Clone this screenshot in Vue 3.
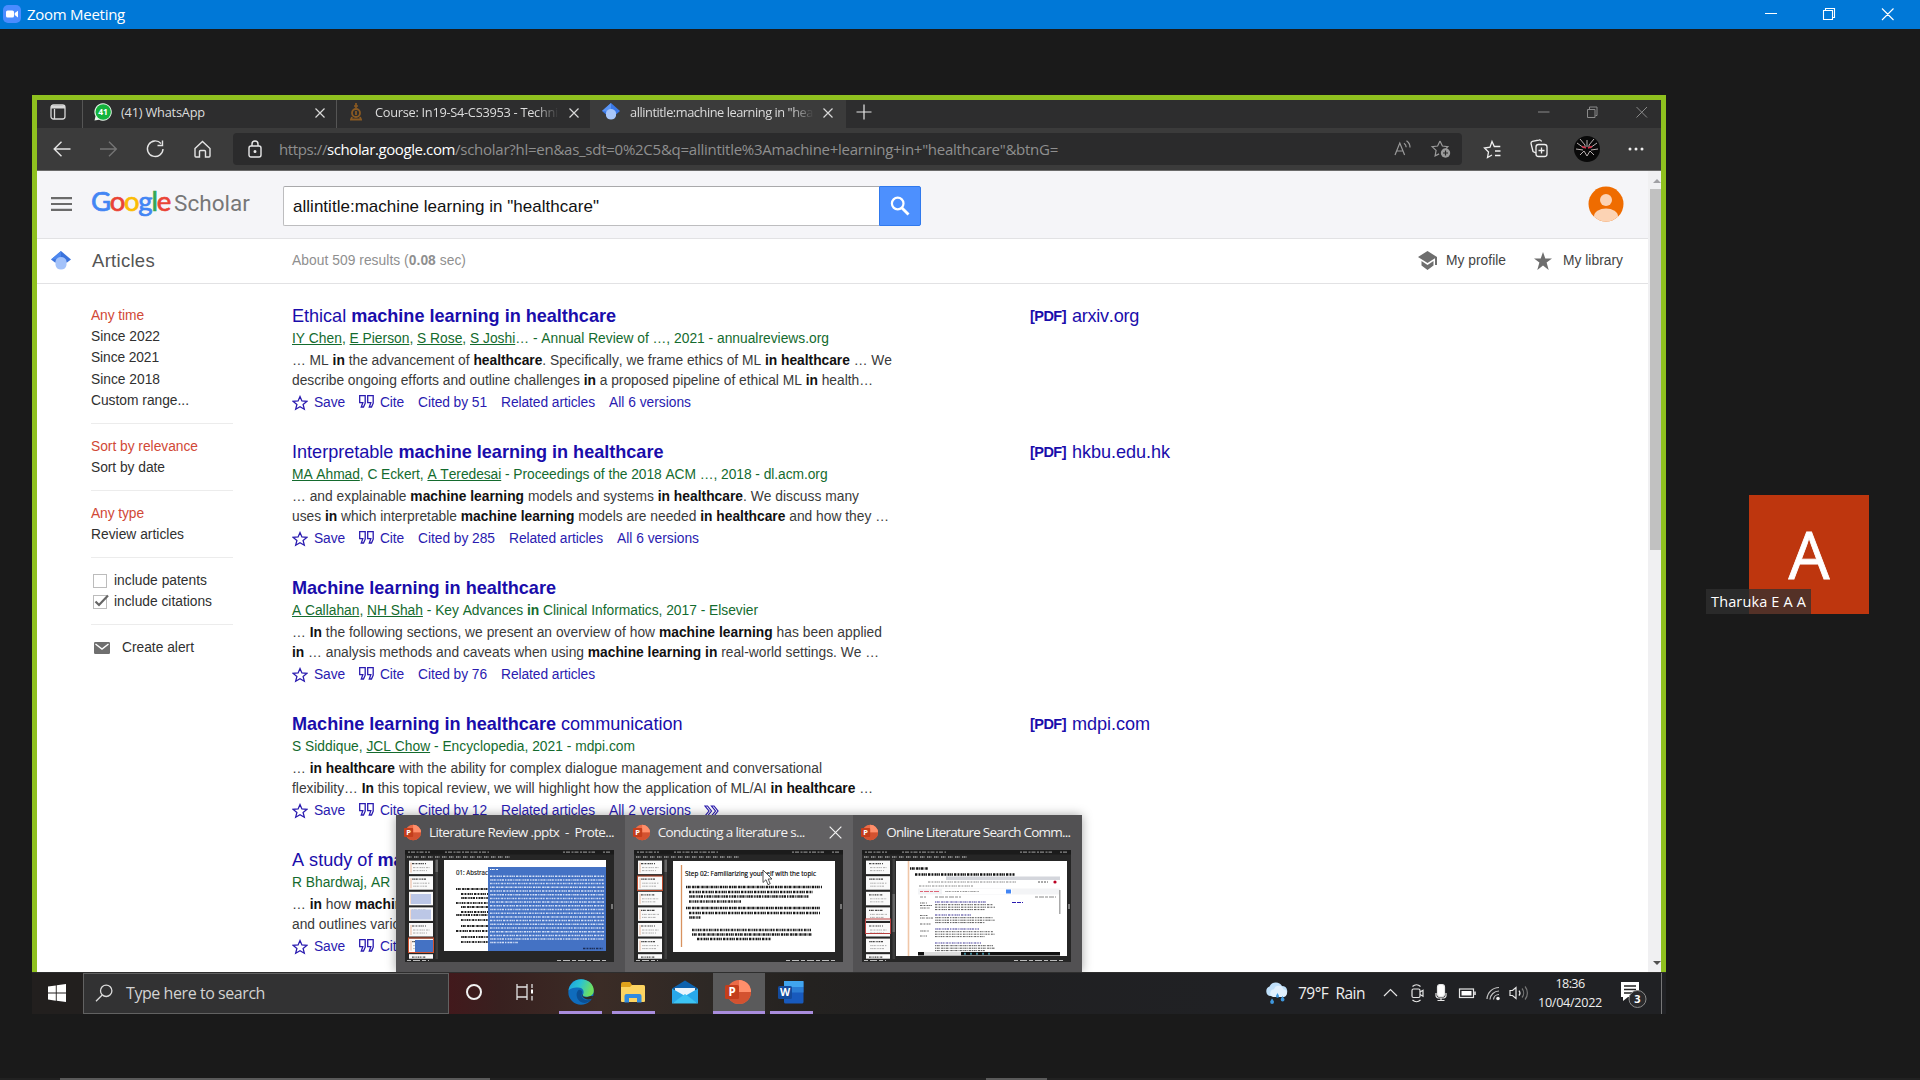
<script setup>
import { h } from 'vue'

// Spreads letters so that a line takes up the given width in pixels.
const vFit = {
  mounted(el, { value }) {
    if (!value) return
    const natural = el.getBoundingClientRect().width
    el.style.letterSpacing = (value - natural) / el.textContent.length + 'px'
  }
}

// *bold* and _underlined_ runs inside a line of text
const Rich = (props) =>
  props.t.split(/(\*[^*]+\*|_[^_]+_)/).filter(Boolean).map((s) =>
    s[0] === '*' ? h('b', s.slice(1, -1)) : s[0] === '_' ? h('u', s.slice(1, -1)) : s
  )
Rich.props = ['t']

const results = [
  {
    title: ['Ethical *machine learning in healthcare*', 324],
    meta: ['_IY Chen_, _E Pierson_, _S Rose_, _S Joshi_… - Annual Review of …, 2021 - annualreviews.org', 537],
    lines: [
      ['… ML *in* the advancement of *healthcare*. Specifically, we frame ethics of ML *in healthcare* … We', 600],
      ['describe ongoing efforts and outline challenges *in* a proposed pipeline of ethical ML *in* health…', 581]
    ],
    links: [['Cited by 51', 69], ['Related articles', 94], ['All 6 versions', 82]],
    pdf: ['arxiv.org', 67]
  },
  {
    title: ['Interpretable *machine learning in healthcare*', 371.5],
    meta: ['_MA Ahmad_, C Eckert, _A Teredesai_ - Proceedings of the 2018 ACM …, 2018 - dl.acm.org', 535.5],
    lines: [
      ['… and explainable *machine learning* models and systems *in healthcare*. We discuss many', 567],
      ['uses *in* which interpretable *machine learning* models are needed *in healthcare* and how they …', 597]
    ],
    links: [['Cited by 285', 77], ['Related articles', 94], ['All 6 versions', 82]],
    pdf: ['hkbu.edu.hk', 98]
  },
  {
    title: ['*Machine learning in healthcare*', 264],
    meta: ['_A Callahan_, _NH Shah_ - Key Advances *in* Clinical Informatics, 2017 - Elsevier', 466],
    lines: [
      ['… *In* the following sections, we present an overview of how *machine learning* has been applied', 590],
      ['*in* … analysis methods and caveats when using *machine learning in* real-world settings. We …', 587]
    ],
    links: [['Cited by 76', 69], ['Related articles', 94]]
  },
  {
    title: ['*Machine learning in healthcare* communication', 390.5],
    meta: ['S Siddique, _JCL Chow_ - Encyclopedia, 2021 - mdpi.com', 343],
    lines: [
      ['… *in healthcare* with the ability for complex dialogue management and conversational', 530],
      ['flexibility… *In* this topical review, we will highlight how the application of ML/AI *in healthcare* …', 581]
    ],
    links: [['Cited by 12', 69], ['Related articles', 94], ['All 2 versions', 82]],
    more: true,
    pdf: ['mdpi.com', 78]
  },
  {
    title: ['A study of *machine*'],
    meta: ['R Bhardwaj, AR'],
    lines: [['… *in* how *machine*'], ['and outlines various']],
    links: []
  }
]

const filters = [
  [['Any time', 53, 1], ['Since 2022', 69], ['Since 2021', 68], ['Since 2018', 69], ['Custom range...', 98]],
  [['Sort by relevance', 107, 1], ['Sort by date', 74]],
  [['Any type', 53, 1], ['Review articles', 93]]
]

// Deterministic word-like dash patterns for the miniature slides
const dash = (i) => ['5 1 3 1 7 1.2 2 1', '3 1 6 1 2 1 4 1.4', '7 1 4 1.2 5 1 2 1', '2 1 5 1 3 1.2 8 1'][i % 4]
const fine = (i) => ['1.2 .6 2 .5 .8 1 2.4 .7', '2 .6 .9 .5 1.4 1.1', '.8 .5 1.6 .6 2.2 1 1 .6', '1.8 .7 1 .5 .7 .9'][i % 4]
const star = 'M8 1.6 9.9 6 14.8 6.4 11.1 9.5 12.3 14.2 8 11.7 3.7 14.2 4.9 9.5 1.2 6.4 6.1 6Z'
</script>

<template>
  <div class="screen">
    <header class="titlebar">
      <svg class="zoomlogo" viewBox="0 0 18 18"><rect width="18" height="18" rx="5" fill="#4a8cff"/><rect x="3" y="5.5" width="8" height="7" rx="1.6" fill="#fff"/><path d="M11.7 8 15 5.8v6.6L11.7 10z" fill="#fff"/></svg>
      <span v-fit="98">Zoom Meeting</span>
      <svg class="winctl" viewBox="0 0 130 14" width="130" height="14" fill="none" stroke="#fff" stroke-width="1.1"><path d="M0 6.5h12M58.5 3.5h9v9h-9zM60.5 3.5v-2h9v9h-2M117 1.500l11.500 11.500M128.500 1.500 117 13"/></svg>
    </header>

    <main>
      <section class="share">
        <div class="browser">
          <div class="tabs">
            <svg class="tabact" viewBox="0 0 16 16" fill="none" stroke="#d8d8d8" stroke-width="1.3"><rect x="1" y="1" width="14" height="14" rx="2.500"/><path d="M1 3h14" stroke-width="3"/><path d="M4.500 5v10"/></svg>
            <div class="tab t1">
              <svg class="fav" viewBox="0 0 18 18"><path d="M9 .300a8.700 8.700 0 1 1-4 16.400L.500 17.600l1-4.300A8.700 8.700 0 0 1 9 .300z" fill="#e9f7ec"/><circle cx="9.200" cy="9" r="7.700" fill="#14b33c"/><text x="9" y="12" text-anchor="middle" font-size="8.500" font-weight="700" fill="#fff">41</text></svg>
              <span v-fit="84">(41) WhatsApp</span>
              <svg class="x" viewBox="0 0 10 10"><path d="M.500.500l9 9M9.500.500l-9 9"/></svg>
            </div>
            <div class="tab t2">
              <svg class="fav crest" viewBox="0 0 12 18" fill="none" stroke="#8a5a22"><path d="M6 0v5M4 3h4" stroke-width="1.700"/><circle cx="6" cy="10" r="4" stroke-width="1.800"/><path d="M2 14l-1 2.500h10L10 14M6 8v4" stroke-width="1.800"/></svg>
              <span class="fade"><i v-fit="183">Course: In19-S4-CS3953 - Techni</i></span>
              <svg class="x" viewBox="0 0 10 10"><path d="M.500.500l9 9M9.500.500l-9 9"/></svg>
            </div>
            <div class="tab t3">
              <svg class="fav" viewBox="0 0 18 18"><path d="M9 0 0 8l4 3.500h10L18 8z" fill="#3b78e7"/><path d="M9 0 0 8l9 1z" fill="#5b95f5"/><path d="M4 9.500a5.300 5.300 0 0 1 10 0V13a5.300 5.300 0 0 1-10 0z" fill="#a8c7fb"/></svg>
              <span class="fade"><i v-fit="183">allintitle:machine learning in "hea</i></span>
              <svg class="x" viewBox="0 0 10 10"><path d="M.500.500l9 9M9.500.500l-9 9"/></svg>
            </div>
            <svg class="plus" viewBox="0 0 16 16"><path d="M8 .500v15M.500 8h15" stroke="#e6e6e6" stroke-width="1.200"/></svg>
            <svg class="bctl" viewBox="0 0 112 12" fill="none" stroke="#8a8a8a"><path d="M0 6h11.500M49.500 3.500h7.500v8h-7.500zM51.500 3V1h7.500v8.500h-1.500M98.500 1l10.500 10.500M109 1 98.500 11.500"/></svg>
          </div>

          <div class="toolbar">
            <svg class="nav" viewBox="0 0 160 20" fill="none" stroke="#e4e4e4" stroke-width="1.400"><path d="M17.500 10H1.500M8.500 2.800 1.200 10l7.300 7.200"/><path d="M47 10h16M56 2.800 63.300 10 56 17.200" stroke="#757575"/><path d="M108 4.500A7.800 7.800 0 1 0 110 10M109.500 1.500v5h-5"/><path d="M142 9.500 149.500 2.500 157 9.500V17a1 1 0 0 1-1 1h-3.500v-5.500a1 1 0 0 0-1-1h-4a1 1 0 0 0-1 1V18H143a1 1 0 0 1-1-1z"/></svg>
            <div class="addr">
              <svg class="lock" viewBox="0 0 14 18" fill="none" stroke="#e8e8e8" stroke-width="1.400"><rect x="1" y="6" width="12" height="11" rx="2"/><path d="M4 6V4a3 3 0 0 1 6 0v2"/><circle cx="7" cy="11.500" r=".800" fill="#fff"/></svg>
              <span class="url"><i v-fit="48">https://</i><i v-fit="128" class="host">scholar.google.com</i><i v-fit="603">/scholar?hl=en&amp;as_sdt=0%2C5&amp;q=allintitle%3Amachine+learning+in+"healthcare"&amp;btnG=</i></span>
              <svg class="addricons" viewBox="0 0 58 20" fill="none" stroke="#9b9b9b" stroke-width="1.200"><path d="M1 16 5.800 4 10.600 16M2.600 12H9M10 4.200a5 5 0 0 1 2.200 4M12.500 1.800A8 8 0 0 1 16 8.500"/><path d="M46 2l2.400 5 5.500.700-2 2M46 2l-2.400 5-5.500.700 4 3.700-1 5.500 4-2"/><circle cx="51.500" cy="14" r="4.700" fill="#9b9b9b" stroke="none"/><path d="M51.500 11.500v5M49 14h5" stroke="#2b2b2b"/></svg>
            </div>
            <svg class="tools" viewBox="0 0 168 28" fill="none" stroke="#f0f0f0" stroke-width="1.300"><path d="M10 20l-4.500 2.500 1-5.500-4-4 5.500-.800L10 6.500l2.300 5h6M13 16h5.500M13 20.500h5.500"/><path d="M54 18l-3-1.500-2-8a2 2 0 0 1 1.500-2.200L57 5a2 2 0 0 1 2.500 1.500"/><rect x="54" y="9.500" width="11" height="12" rx="2.500"/><path d="M59.500 12.500v6M56.500 15.500h6"/>
              <circle cx="105" cy="14" r="13" fill="#090909" stroke="none"/><path d="M95 8l7 5M98 4l5 6M115 8l-7 5M112 4l-5 6M105 5v5M94 14l7 1M116 14l-7 1M102 16l3 5 3-5M98 20l4-4M112 20l-4-4M102 11h6" stroke="#b9b1b1" stroke-width="1"/><path d="M100 11.500l4 1.500M110 11.500l-4 1.500" stroke="#d8304a" stroke-width="1.600"/>
              <g fill="#eee" stroke="none"><circle cx="148" cy="14" r="1.500"/><circle cx="154" cy="14" r="1.500"/><circle cx="160" cy="14" r="1.500"/></g></svg>
          </div>

          <div class="page">
            <div class="content">
              <div class="gshead">
                <svg class="burger" viewBox="0 0 21 14"><path d="M0 1.200h21M0 7h21M0 12.800h21" stroke="#6b6b6b" stroke-width="2.200"/></svg>
                <div class="logo"><b v-fit="79"><i class="gb">G</i><i class="gr">o</i><i class="gy">o</i><i class="gb">g</i><i class="gg">l</i><i class="gr">e</i></b><span v-fit="76">Scholar</span></div>
                <div class="searchbox"><span v-fit="306">allintitle:machine learning in "healthcare"</span></div>
                <div class="searchbtn"><svg viewBox="0 0 20 20" fill="none" stroke="#fff"><circle cx="7.700" cy="7.500" r="5.800" stroke-width="2.200"/><path d="M12 12l6.500 6.500" stroke-width="2.800"/></svg></div>
                <svg class="user" viewBox="0 0 36 36"><defs><clipPath id="uc"><circle cx="18" cy="18" r="17.500"/></clipPath></defs><g clip-path="url(#uc)"><rect width="36" height="36" fill="#ef6c00"/><circle cx="18" cy="14" r="6" fill="#fcd3b4"/><ellipse cx="18" cy="30.500" rx="12" ry="8" fill="#fcd3b4"/></g></svg>
              </div>
              <div class="subhead">
                <svg class="cap" viewBox="0 0 20 20"><path d="M10 0 0 8.500l4 3h12l4-3z" fill="#3b73dc"/><path d="M10 0 0 8.500l10-1z" fill="#4d87ee"/><path d="M4.500 10a5.800 5.800 0 0 1 11 0v4a5.600 5.600 0 0 1-11 0z" fill="#a3c2fa"/></svg>
                <span class="art"><i v-fit="63">Articles</i></span>
                <span class="about" v-fit="174">About 509 results (<b>0.08</b> sec)</span>
                <span class="spring"></span>
                <svg class="mp" viewBox="0 0 19 20" fill="#6e6e6e"><path d="M9.500 0 0 6l9.500 6L17 7.300V14h2V6zM3.500 10v4.500l6 4.500 6-4.500V10l-6 4z"/></svg>
                <span class="my" v-fit="60">My profile</span>
                <svg class="ml" viewBox="0 0 18 18" fill="#6e6e6e"><path d="M9 0l2.300 6.500H18L12.600 10.600 14.700 18 9 13.500 3.300 18 5.400 10.600 0 6.500h6.700z"/></svg>
                <span class="my" v-fit="60">My library</span>
              </div>

              <div class="cols">
                <aside>
                  <div v-for="(g, gi) in filters" :key="gi" class="group">
                    <p v-for="f in g" :key="f[0]" :class="{ on: f[2] }"><span v-fit="f[1]">{{ f[0] }}</span></p>
                  </div>
                  <div class="group checks">
                    <p><svg viewBox="0 0 16 16"><rect x=".500" y="1.500" width="13" height="13" fill="#fff" stroke="#bcbcbc"/></svg><span v-fit="93">include patents</span></p>
                    <p><svg viewBox="0 0 16 16"><rect x=".500" y="1.500" width="13" height="13" fill="#fff" stroke="#bcbcbc"/><path d="M2.500 7.500 6 11 15 1.500" fill="none" stroke="#666" stroke-width="2.200"/></svg><span v-fit="98">include citations</span></p>
                  </div>
                  <p class="alert"><svg viewBox="0 0 16 12"><rect width="16" height="12" rx="1.200" fill="#6f6f6f"/><path d="M1.500 2 8 7l6.500-5" fill="none" stroke="#fff" stroke-width="1.400"/></svg><span v-fit="72">Create alert</span></p>
                </aside>

                <div class="results">
                  <article v-for="(r, i) in results" :key="i">
                    <div class="body">
                      <h3><span v-fit="r.title[1]"><Rich :t="r.title[0]" /></span></h3>
                      <div class="meta"><span v-fit="r.meta[1]"><Rich :t="r.meta[0]" /></span></div>
                      <div v-for="l in r.lines" :key="l[0]" class="snip"><span v-fit="l[1]"><Rich :t="l[0]" /></span></div>
                      <div class="links">
                        <svg class="st" viewBox="0 0 16 16"><path :d="star" fill="none" stroke="#2a1bb0" stroke-width="1.300"/></svg><span class="save" v-fit="31">Save</span>
                        <svg class="qt" viewBox="0 0 15 13" fill="none" stroke="#2a1bb0" stroke-width="1.300"><path d="M.700.700h5.500v7.500L4.500 12H2.300l1.500-4.300H.700zM8.700.700h5.500v7.500L12.500 12h-2.200l1.500-4.300H8.700z"/></svg><span v-fit="24">Cite</span>
                        <span v-for="k in r.links" :key="k[0]" class="lk" v-fit="k[1]">{{ k[0] }}</span>
                        <svg v-if="r.more" class="dbl" viewBox="0 0 15 12" fill="none" stroke="#2a1bb0" stroke-width="1.200"><path d="M1 1h2.500l4 5-4 5H1l4-5zM7.500 1H10l4 5-4 5H7.500l4-5z"/></svg>
                      </div>
                    </div>
                    <div v-if="r.pdf" class="pdf"><b v-fit="36">[PDF]</b><span v-fit="r.pdf[1]">{{ r.pdf[0] }}</span></div>
                  </article>
                </div>
              </div>
            </div>
            <div class="scroll"><i class="up"></i><i class="thumb"></i><i class="down"></i></div>
          </div>
        </div>

        <div class="previews">
          <div v-for="n in 3" :key="n" class="pv" :class="'pv' + n">
            <div class="pvt">
              <svg class="pp" viewBox="0 0 26 26"><circle cx="14" cy="13" r="12" fill="#ed6c47"/><path d="M14 1a12 12 0 0 1 12 12H14z" fill="#ff8f6b"/><path d="M2 13h24a12 12 0 0 1-24 0z" fill="#d35230"/><rect y="6" width="14" height="14" rx="1.500" fill="#c43e1c"/><text x="7" y="17" text-anchor="middle" font-size="11.500" font-weight="700" fill="#fff">P</text></svg>
              <span v-if="n === 1" v-fit="185">Literature Review .pptx&nbsp; -&nbsp; Prote...</span>
              <span v-if="n === 2" v-fit="147">Conducting a literature s...</span>
              <span v-if="n === 3" v-fit="184">Online Literature Search Comm...</span>
              <svg v-if="n === 2" class="px" viewBox="0 0 14 14"><path d="M.700.700l12.600 12.600M13.300.700.700 13.300" stroke="#f2f2f2" stroke-width="1.300"/></svg>
            </div>
            <svg class="mini" viewBox="0 0 209 112" width="209" height="112">
              <rect width="209" height="112" fill="#262626"/>
              <rect width="209" height="4.500" fill="#1b1b1b"/>
              <path d="M3 2.200h22M40 2.200h44M158 2.200h32M198 2.200h8" stroke="#888" stroke-width="1.200" stroke-dasharray="2 1 4 1.500"/>
              <path d="M2 7h104" stroke="#a2a2a2" stroke-width="1.700" stroke-dasharray="1 .500 1.500 .500 1 2.500"/>
              <path d="M2 110.500h22M152 110.500h50" stroke="#bbb" stroke-width="1.200" stroke-dasharray="4 2 7 2"/>
              <rect x="206" y="54" width="2" height="5" fill="#777"/>
              <rect x="30.500" y="9" width="2.500" height="100" fill="#3d3d3d"/>
              <rect x="30.500" :y="n === 3 ? 44 : 10" width="2.500" :height="n === 3 ? 38 : 12" fill="#666"/>
              <g v-for="k in 7" :key="k">
                <rect x="4" :y="-5 + k * 15.600" width="24" :height="k === 7 ? 4.500 : 13.500" fill="#fafafa"/>
                <path :d="`M7 ${-2 + k * 15.6}h14`" stroke="#444" stroke-width="1.200" :stroke-dasharray="fine(k)"/>
                <g v-if="k < 7"><path :d="`M8 ${2 + k * 15.6}h17M8 ${5 + k * 15.6}h14`" stroke="#999" stroke-width=".800" :stroke-dasharray="fine(k)"/>
                <path v-if="n !== 3" :d="`M6 ${-3 + k * 15.6}v10`" stroke="#e59870" stroke-width=".700"/></g>
              </g>
              <g v-if="n === 1">
                <g fill="#bcc7e6"><rect x="6" y="44" width="20" height="10"/><rect x="6" y="59.500" width="20" height="10"/></g>
                <rect x="3.500" y="88" width="25" height="14.500" fill="none" stroke="#d35230"/><rect x="10" y="90" width="18" height="12" fill="#4472c4"/>
                <rect x="39" y="10" width="162" height="91" fill="#fff"/>
                <text x="51" y="25" font-size="6.500" fill="#111" stroke="#111" stroke-width=".150" textLength="32" lengthAdjust="spacingAndGlyphs">01: Abstrac</text>
                <g stroke="#222" stroke-width="2"><path v-for="(y, k) in [39, 44, 48, 53, 57, 62, 65, 70, 76, 81, 87, 92]" :key="k" :d="`M${k % 3 ? 56 : 51} ${y}H84`" :stroke-dasharray="fine(k)"/></g>
                <rect x="83" y="17" width="118" height="84" fill="#4472c4"/>
                <path d="M85 19.500h8" stroke="#fff" :stroke-dasharray="fine(0)"/>
                <g stroke="#d3dff6" stroke-width="1.500"><path v-for="k in 18" :key="k" :d="`M85 ${22.5 + k * 3.7}H199`" :stroke-dasharray="fine(k)"/><path d="M85 92.500h28" :stroke-dasharray="fine(2)"/></g>
                <path d="M178 98.500h20" stroke="#1b2c55" stroke-width="1.500" :stroke-dasharray="fine(1)"/>
              </g>
              <g v-if="n === 2">
                <rect x="3.500" y="26" width="25" height="14.500" fill="none" stroke="#b9472a"/>
                <rect x="39" y="11" width="162" height="91" fill="#fff"/><path d="M47.500 15v82" stroke="#d8925f" stroke-width="1.300"/>
                <text x="51" y="26" font-size="6.500" fill="#000" stroke="#000" stroke-width=".150" textLength="131" lengthAdjust="spacingAndGlyphs">Step 02: Familiarizing yourself with the topic</text>
                <g stroke="#1a1a1a" stroke-width="2.300">
                  <path v-for="(l, k) in [[52, 37, 188], [55, 42, 179], [55, 46.5, 175], [55, 51.5, 107], [52, 58, 186], [55, 63, 186], [55, 67.5, 67], [58, 80, 177], [58, 84.5, 178], [63, 89, 137]]" :key="k" :d="`M${l[0]} ${l[1]}H${l[2]}`" :stroke-dasharray="fine(k)"/>
                </g>
              </g>
              <g v-if="n === 3">
                <rect x="3.500" y="69" width="25" height="14.500" fill="none" stroke="#b94040"/>
                <rect x="34" y="11" width="171" height="95" fill="#fff"/><path d="M46.500 11v95" stroke="#f0c7a8" stroke-width="1.600"/>
                <path d="M48 18.500h18" stroke="#111" stroke-width="2.500" :stroke-dasharray="fine(0)"/>
                <path d="M53 24.500h100" stroke="#111" stroke-width="2.300" :stroke-dasharray="fine(1)"/>
                <rect x="84" y="26.500" width="114" height="3.500" fill="#d4d6dc"/><path d="M66 32h88M57 36h54" stroke="#888" :stroke-dasharray="fine(1)"/>
                <path d="M176 32h10" stroke="#555" stroke-dasharray="2 1"/><circle cx="193" cy="32" r="1.600" fill="#b02"/><circle cx="193" cy="41" r="1.600" fill="#b04"/>
                <rect x="56" y="38.500" width="142" height="6" fill="#f3f4f6"/><path d="M58 41.500h20" stroke="#d67" stroke-dasharray="3 1 5 1"/><rect x="80" y="39" width="70" height="5" fill="#fff"/><path d="M83 41.500h34" stroke="#999" :stroke-dasharray="fine(2)"/><rect x="144" y="39.500" width="5" height="4" fill="#4285f4"/>
                <path d="M58 47h6M73 47h26M173 47h21" stroke="#888" stroke-dasharray="3 1 5 1"/>
                <g stroke="#666"><path v-for="(y, k) in [53, 55.5, 58, 65.5, 68, 74, 81, 86]" :key="y" :d="`M58 ${y}h${7 + (k * 5) % 7}`" :stroke-dasharray="fine(k)"/></g>
                <g v-for="(y, k) in [52, 65, 79, 93]" :key="y"><path :d="`M73 ${y}h${[51, 36, 44, 46][k]}`" stroke="#3c3596" stroke-width="1.200" :stroke-dasharray="fine(k)"/><path :d="`M73 ${y + 2.7}h58M73 ${y + 5.2}h60M73 ${y + 7.6}h50`" stroke="#555" :stroke-dasharray="fine(k + 1)"/></g>
                <path d="M150 52.500h11" stroke="#2a1bb0" stroke-width="1.200" stroke-dasharray="4 1"/><rect x="197" y="40" width="1.500" height="24" fill="#aaa"/>
                <rect x="56" y="102" width="142" height="3.500" fill="#111"/><rect x="62" y="102" width="37" height="3.500" fill="#ddd"/><path d="M102 103.800h30" stroke="#489" stroke-width="2" stroke-dasharray="2 4"/>
              </g>
            </svg>
          </div>
        </div>
        <svg class="cursor" viewBox="0 0 11 17"><path d="M1 1v12.500l3-2.800 2 5 2.200-1-2-4.700H10z" fill="#fff" stroke="#444" stroke-width=".900"/></svg>

        <footer class="taskbar">
          <div class="start"><svg viewBox="0 0 18 18" fill="#fff"><path d="M0 2.500 7.800 1.400v7.200H0zM8.700 1.300 18 0v8.600H8.700zM0 9.500h7.800v7.200L0 15.600zM8.700 9.500H18V18l-9.300-1.300z"/></svg></div>
          <div class="find"><svg viewBox="0 0 18 18" fill="none" stroke="#dcdcdc" stroke-width="1.300"><circle cx="11.200" cy="6.800" r="5.700"/><path d="M7.200 11 1 17.200"/></svg><span v-fit="139">Type here to search</span></div>
          <div class="apps">
            <div class="app a1"><svg viewBox="0 0 18 18"><circle cx="9" cy="9" r="7" fill="none" stroke="#f2f2f2" stroke-width="2"/></svg></div>
            <div class="app a2"><svg viewBox="0 0 18 18" fill="none" stroke="#e2e2e2" stroke-width="1.300"><path d="M1 1v3h10V1M1 17v-3h10v3M1 4.500v9M11 4.500v9M16 1v4M16 13v4.500"/><rect x="15" y="6.500" width="2" height="4" fill="#fff" stroke="none"/></svg></div>
            <div class="app a3 run"><svg viewBox="0 0 26 26"><defs><linearGradient id="e1" x1="0" y1="0" x2="1" y2=".300"><stop offset="0" stop-color="#1b9de2"/><stop offset=".500" stop-color="#2bc3d2"/><stop offset="1" stop-color="#6ee05f"/></linearGradient></defs><circle cx="13" cy="13" r="12.700" fill="#0f6cbd"/><path d="M.400 12C1.500 4.500 7 .300 13 .300 20.500.300 25.800 5.500 25.800 11.500c0 4-3 6.200-6.500 6.200-3 0-4.800-1-4.300-2.300 1.300-2 1-7-5-7C5 8.400.800 10 .400 12z" fill="url(#e1)"/><path d="M10.500 11C8 13 7.500 19 12 22.500c3.500 2.500 8 1.500 11.500-2-4 1.800-8.700.500-9.800-3-.600-2 .800-3 .500-4.500-.300-1.600-2-2.700-3.700-2z" fill="#0b4f94"/><path d="M23.500 20c-2.500.800-5 .500-6.800-.500-2.200-1.200-3.500-3-2.500-4.500l.500 2c1.500 1.500 5 1.500 8 0l3 .200z" fill="#302925"/></svg></div>
            <div class="app a4 run"><svg viewBox="0 0 26 22"><path d="M1 3a2 2 0 0 1 2-2h7l2 3h11a2 2 0 0 1 2 2v3H1z" fill="#e0a21b"/><path d="M1 6h9l2-2h11a2 2 0 0 1 2 2v14a1 1 0 0 1-1 1H2a1 1 0 0 1-1-1z" fill="#fcd462"/><path d="M4.500 21.500V15a2 2 0 0 1 2-2h13a2 2 0 0 1 2 2v6.500h-4.500V17H9v4.500z" fill="#2f8be0"/></svg></div>
            <div class="app a5"><svg viewBox="0 0 26 24"><path d="M0 8.500 13 .500l13 8-13 5z" fill="#0d62ae"/><path d="M3 8h20v8H3z" fill="#e9f4fc"/><path d="M0 8.500 13 16 0 23.500z" fill="#28a8ea"/><path d="M26 8.500 13 16l13 7.500z" fill="#28a8ea"/><path d="M0 23.500 13 14l13 9.500z" fill="#3cc4f5"/></svg></div>
            <div class="app a6 run"><svg viewBox="0 0 26 26"><circle cx="14" cy="13" r="12" fill="#ed6c47"/><path d="M14 1a12 12 0 0 1 12 12H14z" fill="#ff8f6b"/><path d="M2 13h24a12 12 0 0 1-24 0z" fill="#d35230"/><rect y="6" width="14" height="14" rx="1.500" fill="#c43e1c"/><text x="7" y="17" text-anchor="middle" font-size="11.500" font-weight="700" fill="#fff">P</text></svg></div>
            <div class="app a7 run"><svg viewBox="0 0 26 24"><rect x="6" y="1" width="19.500" height="22.500" rx="1.500" fill="#185abd"/><path d="M6 1h19.500v6H6z" fill="#41a5ee"/><path d="M6 7h19.500v5.500H6z" fill="#2b7cd3"/><rect y="6" width="14" height="13" rx="1.500" fill="#144b9c"/><text x="7" y="16.300" text-anchor="middle" font-size="10.500" font-weight="700" fill="#fff">W</text></svg></div>
          </div>
          <div class="tray">
            <svg class="wx" viewBox="0 0 24 22"><path d="M5 14a5 5 0 0 1-.500-9.500A7 7 0 0 1 17 4a5.200 5.200 0 0 1 2 10z" fill="#bfe0fa"/><path d="M8 15a4 4 0 0 1 1-7.800 5 5 0 0 1 9.500 0A4 4 0 0 1 19 15z" fill="#e0f0fd"/><path d="M7 16.500c1.500 2 2 2.500 2 3.500a1.900 1.900 0 0 1-3.800 0c0-1 .600-1.500 1.800-3.500zM17.500 14c1.200 2 2 2.500 2 3.500a1.900 1.900 0 0 1-3.800 0c0-1 .600-1.500 1.800-3.500zM12.500 11c1 2 1.500 2.500 1.500 3.200a1.500 1.500 0 0 1-3 0c0-.700.500-1.200 1.500-3.200z" fill="#3f97dc"/></svg>
            <span class="temp" v-fit="67">79°F&nbsp; Rain</span>
            <svg class="ticons" viewBox="0 0 146 20" fill="none" stroke="#e6e6e6" stroke-width="1.200"><path d="M1 13 7.500 6.500 14 13"/><rect x="29" y="6" width="8" height="8.500" rx="1.500"/><path d="M37 9l3-1.800v6L37 11.500M29.500 3.500a6 6 0 0 1 8 0M29.500 17a6 6 0 0 0 8 0"/><rect x="54.500" y="1.500" width="7" height="12" rx="2.500" fill="#fff"/><path d="M53 10v3a3 3 0 0 0 2 2h6a3 3 0 0 0 2-2v-3M58 15v2.500M54.500 17.500h7" /><rect x="76.500" y="6" width="14" height="8.500"/><rect x="78.500" y="8" width="10" height="4.500" fill="#fff" stroke="none"/><path d="M92 8.500v3.500" stroke-width="1.600"/><path d="M104 16A12 12 0 0 1 116 4.500M107 16.500a9 9 0 0 1 9-8.500M110.500 16.500a5.500 5.500 0 0 1 5.500-5" stroke="#c4c4c4"/><circle cx="115" cy="15.500" r="1.200" fill="#fff"/><path d="M127 7.500h2.500L133 4.500v11l-3.500-3H127z"/><path d="M136 7.500a4 4 0 0 1 0 5" /><path d="M139 5.500a7 7 0 0 1 0 9M142 3.500a10 10 0 0 1 0 13" stroke="#777"/></svg>
            <div class="clock"><span v-fit="29">18:36</span><span v-fit="64">10/04/2022</span></div>
            <svg class="note" viewBox="0 0 28 28"><path d="M1 1h18v15H8l-5 4v-4H1z" fill="#fff"/><path d="M4 5h12M4 8.500h12M4 12h8" stroke="#222" stroke-width="1.300"/><circle cx="17.500" cy="18" r="8.500" fill="#2a2a2c" stroke="#8a8a8a"/><text x="17.500" y="22" text-anchor="middle" font-size="11" font-weight="700" fill="#fff">3</text></svg>
          </div>
        </footer>
      </section>

      <section class="person">
        <span>A</span>
        <div class="name"><i v-fit="95">Tharuka E A A</i></div>
      </section>
    </main>
    <div class="hiddenbar"><i></i><i></i></div>
  </div>
</template>

<style>
body { margin: 0; background: #1a1a1a; overflow: hidden; }
</style>

<style scoped>
* { box-sizing: border-box; }
i { font-style: normal; }
span, i, b { white-space: nowrap; }
svg { display: block; flex: none; }
p, h3 { margin: 0; }
.screen { width: 1920px; height: 1080px; background: #1a1a1a; display: flex; flex-direction: column; overflow: hidden; font-family: "Open Sans", "Noto Sans", sans-serif; font-kerning: none; }
.titlebar { height: 29px; flex: none; background: #0078d7; color: #fff; display: flex; align-items: center; padding: 0 25px 2px 3px; font-size: 15px; }
.zoomlogo { width: 18px; height: 18px; margin-right: 6px; }
.titlebar span { flex: none; }
.winctl { margin-left: auto; }
main { flex: 1; display: flex; padding: 66px 0 0 32px; min-height: 0; }
.share { width: 1634px; flex: none; position: relative; height: 919px; display: flex; flex-direction: column; }
.browser { height: 877px; border: 5px solid #8fc11f; border-bottom: 0; display: flex; flex-direction: column; overflow: hidden; background: #fff; }

.tabs { height: 29px; flex: none; background: #2d2d2e; display: flex; color: #dcdcdc; font-size: 12.8px; border-bottom: 1px solid #3b3b3b; }
.tabact { width: 16px; height: 16px; margin: 4px 16px 0 13px; }
.tab { height: 28px; display: flex; align-items: center; padding-bottom: 5px; flex: none; }
.tab .fav { width: 18px; height: 18px; }
.tab .fav.crest { width: 12px; margin-left: 3px; margin-right: 3px; }
.tab .x { width: 10px; height: 10px; margin-left: auto; stroke: #d8d8d8; stroke-width: 1.2; position: relative; top: 1px; }
.tab span { margin-left: 9px; flex: none; }
.t1 { width: 255px; border-left: 1px solid #555; border-right: 1px solid #555; padding-left: 11px; padding-right: 11px; }
.t2 { width: 253px; padding-left: 10px; padding-right: 11px; }
.t2 span { margin-left: 10px; }
.t3 { width: 256px; height: 29px; background: #3b3b3b; padding: 0 13px 6px 12px; }
.t3 span { margin-left: 10px; }
.fade { width: 184px; overflow: hidden; -webkit-mask-image: linear-gradient(90deg, #000 87%, transparent); mask-image: linear-gradient(90deg, #000 87%, transparent); }
.fade i { display: inline-block; }
.plus { width: 16px; height: 16px; margin: 4px 0 0 10px; }
.bctl { width: 112px; height: 12px; margin: 6px 11px 0 auto; }

.toolbar { height: 42px; flex: none; background: #3b3b3b; border-bottom: 1px solid #6a6a6a; display: flex; align-items: center; padding-bottom: 2px; }
.nav { width: 160px; height: 20px; margin: 0 20px 0 16px; }
.addr { width: 1229px; height: 32px; background: #2b2b2c; border-radius: 4px; display: flex; align-items: center; padding: 0 10px 0 15px; }
.lock { width: 14px; height: 18px; margin-right: 17px; }
.url { color: #8f8f8f; font-size: 15px; display: flex; }
.url .host { color: #fff; }
.addricons { width: 58px; height: 20px; margin-left: auto; }
.tools { width: 168px; height: 28px; margin-left: 20px; }

.page { flex: 1; display: flex; min-height: 0; font-family: "Liberation Sans", Arial, sans-serif; }
.content { width: 1611px; overflow: hidden; }
.scroll { width: 13px; background: #f0f0f2; display: flex; flex-direction: column; align-items: flex-end; }
.up { margin: 8px 0 6px; border: 4.500px solid transparent; border-top: 0; border-bottom: 4px solid #a0a0a4; }
.thumb { width: 11px; height: 361px; background: #c1c1c1; }
.down { margin-top: auto; margin-bottom: 7px; border: 4.500px solid transparent; border-bottom: 0; border-top: 4.500px solid #505050; }
.gshead { height: 68px; background: #f5f5f8; border-bottom: 1px solid #e2e2e4; display: flex; align-items: flex-start; }
.burger { width: 21px; height: 14px; margin: 26px 19px 0 14px; }
.logo { width: 192px; height: 40px; margin-top: 10px; display: flex; align-items: baseline; gap: 4px; }
.logo b { font: 400 27.500px/40px Lato, sans-serif; -webkit-text-stroke: .7px; flex: none; }
.logo span { font: 400 22.500px/40px Roboto, sans-serif; color: #777; flex: none; }
.gb { color: #4285f4; } .gr { color: #ea4335; } .gy { color: #fbbc05; } .gg { color: #34a853; }
.searchbox { width: 596px; height: 40px; margin-top: 15px; border: 1px solid #bdbdbf; border-top-color: #a9a9ab; border-right: 0; background: #fff; padding: 2px 0 0 9px; display: flex; align-items: center; font-size: 17px; color: #111; border-radius: 2px 0 0 2px; }
.searchbtn { width: 42px; height: 40px; margin-top: 15px; background: #4d90fe; border: 1px solid #3079ed; border-radius: 0 2px 2px 0; display: flex; align-items: center; justify-content: center; }
.searchbtn svg { width: 20px; height: 20px; }
.user { width: 36px; height: 36px; margin: 15px 24px 0 auto; }
.subhead { height: 45px; border-bottom: 1px solid #e2e2e4; display: flex; align-items: center; padding: 0 25px 1px 14px; font-size: 13.8px; }
.cap { width: 20px; height: 20px; }
.art { width: 200px; margin-left: 21px; font-size: 18.500px; color: #555; }
.art i { display: inline-block; }
.about { color: #8f8f8f; font-size: 13.800px; }
.spring { flex: 1; }
.mp { width: 19px; height: 20px; margin-right: 9px; }
.ml { width: 18px; height: 18px; margin: 0 11px 0 28px; }
.my { color: #444; flex: none; }

.cols { display: flex; padding: 20px 0 0 54px; }
aside { width: 142px; margin-right: 59px; padding-top: 1px; font-size: 13.800px; color: #303030; }
aside p { height: 21.300px; line-height: 22px; display: flex; align-items: center; }
aside .on { color: #d14836; }
.group { border-bottom: 1px solid #ececec; padding-bottom: 11.500px; margin-bottom: 12px; }
.checks p { padding-left: 2px; }
.checks svg { width: 16px; height: 16px; margin-right: 5px; }
.alert { padding-left: 3px; }
.alert svg { width: 16px; height: 12px; margin-right: 12px; }
article { height: 136px; display: flex; font-size: 13.800px; }
.body { width: 738px; }
article h3 { font-weight: 400; font-size: 18.100px; line-height: 24px; height: 22.500px; color: #1a0dab; }
h3 span, .meta span, .snip span, .searchbox span, aside span, .pdf b, .pdf span { display: inline-block; }
.meta { line-height: 24px; height: 23px; color: #146b2e; }
.meta u { text-underline-offset: 2px; }
.snip { height: 20.500px; line-height: 21px; color: #3a3a3a; }
.snip :deep(b) { color: #111; }
.links { height: 24px; display: flex; align-items: center; color: #2a1bb0; }
.links span { flex: none; }
.st { width: 16px; height: 16px; }
.save { margin: 0 14px 0 6px; }
.qt { width: 15px; height: 13px; margin-right: 6px; position: relative; top: -1px; }
.lk { margin-left: 14px; }
.dbl { width: 15px; height: 12px; margin-left: 13px; }
.pdf { color: #1a0dab; font-size: 18.100px; line-height: 24px; display: flex; gap: 6px; }
.pdf b { font-size: 14.500px; }

.previews { position: absolute; left: 364px; top: 720px; width: 686px; height: 157px; background: #525153; display: flex; box-shadow: 0 0 10px rgba(0,0,0,.35); color: #f2f2f2; }
.pv { flex: 1; padding: 7px 0 0 9px; }
.pv2 { background: #626163; }
.pvt { height: 20px; margin-bottom: 8px; display: flex; align-items: center; font-size: 13.500px; }
.pvt span { flex: none; }
.pp { width: 17px; height: 17px; margin: 0 8px 0 -1px; }
.px { width: 13px; height: 13px; margin-left: 24px; }
.cursor { position: absolute; left: 730px; top: 774px; width: 11px; height: 17px; }

.taskbar { height: 42px; flex: none; background: #202124; display: flex; border-top: 1px solid #2e2e2e; color: #eee; position: relative; }
.start { width: 51px; background: #221f1e; display: flex; align-items: center; justify-content: center; padding: 0 11px 2px 10px; }
.start svg { width: 18px; height: 18px; }
.find { width: 366px; background: #323233; border: 1px solid #626262; display: flex; align-items: center; padding: 0 0 2px 11px; font-size: 16px; color: #d2d2d2; }
.find svg { width: 18px; height: 18px; margin-right: 13px; }
.apps { width: 780px; display: flex; background: linear-gradient(90deg, #42191c 0, #38201f 50px, #3b2c26 150px, #2d2825 260px, #242220 360px, #202022 520px, #202124); }
.app { display: flex; align-items: center; justify-content: center; border-bottom: 3px solid transparent; }
.app svg { width: 26px; height: 26px; }
.run { border-bottom-color: #a98ddd; }
.a1 { width: 50px; } .a1 svg { width: 18px; height: 18px; }
.a2 { width: 51px; } .a2 svg { width: 18px; height: 18px; }
.a3 { width: 43px; margin-left: 9px; }
.a4 { width: 43px; margin-left: 10px; } .a4 svg { height: 22px; margin-left: -2px; }
.a5 { width: 58px; } .a5 svg { height: 24px; margin-left: 2px; }
.a6 { width: 52px; background: #5a5a5b; } .a6 svg { margin-left: -2px; }
.a7 { width: 43px; margin-left: 5px; } .a7 svg { height: 24px; margin-left: -2px; }
.tray { flex: 1; display: flex; align-items: center; padding: 0 0 2px 36px; margin-right: 4px; border-right: 1px solid #777; }
.wx { width: 24px; height: 22px; margin-right: 9px; }
.temp { font-size: 15.500px; margin-right: 18px; flex: none; }
.ticons { width: 146px; height: 20px; margin-right: 6px; }
.clock { width: 70px; font-size: 12.600px; line-height: 19px; display: flex; flex-direction: column; align-items: center; margin-right: 15px; }
.note { width: 28px; height: 28px; margin-top: 5px; }

.person { position: relative; width: 120px; height: 119px; margin: 400px 0 0 83px; background: #be360e; color: #fff; font-size: 65px; font-weight: 500; -webkit-text-stroke: .8px #fff; line-height: 118px; text-align: center; }
.name { position: absolute; left: -43px; bottom: 0; width: 105px; height: 25px; background: rgba(48,48,48,.75); font-size: 14.500px; font-weight: 400; -webkit-text-stroke: 0; line-height: 25px; text-align: left; padding-left: 5px; }
.name i { display: inline-block; }
.hiddenbar { height: 2px; flex: none; background: #212121; display: flex; padding-left: 60px; }
.hiddenbar i { width: 430px; background: #5a5a5a; }
.hiddenbar i + i { width: 61px; margin-left: 496px; }
</style>
